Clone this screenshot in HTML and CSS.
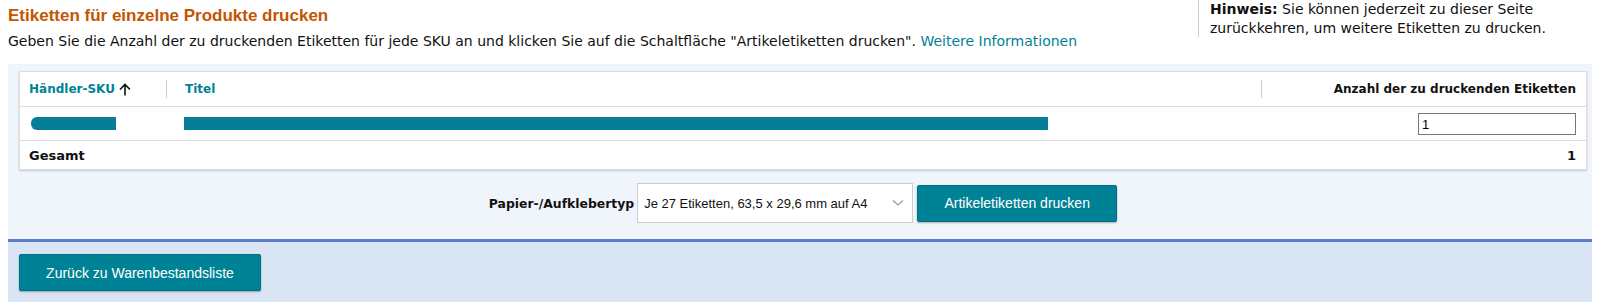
FILE: index.html
```html
<!DOCTYPE html>
<html lang="de">
<head>
    <meta charset="UTF-8">
    <title>Etiketten drucken</title>
    <link rel="stylesheet" href="styles.css">
</head>
<body>
    <div class="top">
        <div class="intro">
            <h1>Etiketten für einzelne Produkte drucken</h1>
            <p>Geben Sie die Anzahl der zu druckenden Etiketten für jede SKU an und klicken Sie auf die Schaltfläche "Artikeletiketten drucken". <a href="#">Weitere Informationen</a></p>
        </div>
        <div class="hint">
            <b>Hinweis:</b> Sie können jederzeit zu dieser Seite zurückkehren, um weitere Etiketten zu drucken.
        </div>
    </div>

    <div class="panel">
        <div class="card">
            <div class="row head">
                <div class="col sku"><span class="link">Händler-SKU</span> <span class="arrow">
                    <svg width="12" height="13" viewBox="0 0 12 13"><path d="M6 12.5V1.5M1 6.5L6 1.5L11 6.5" fill="none" stroke="#111" stroke-width="1.6"/></svg>
                </span></div>
                <div class="col title"><span class="link">Titel</span></div>
                <div class="col qty">Anzahl der zu druckenden Etiketten</div>
            </div>
            <div class="row item">
                <div class="col sku"><span class="bar sku-bar"></span></div>
                <div class="col title"><span class="bar title-bar"></span></div>
                <div class="col qty"><input class="qty-input" type="text" value="1"></div>
            </div>
            <div class="row total">
                <div class="col sku">Gesamt</div>
                <div class="col title"></div>
                <div class="col qty">1</div>
            </div>
        </div>

        <div class="controls">
            <label class="paper-label">Papier-/Aufklebertyp</label>
            <div class="select">
                <span>Je 27 Etiketten, 63,5 x 29,6 mm auf A4</span>
                <svg width="12" height="8" viewBox="0 0 12 8"><path d="M1 1.5L6 6L11 1.5" fill="none" stroke="#999" stroke-width="1.3"/></svg>
            </div>
            <button class="btn">Artikeletiketten drucken</button>
        </div>
    </div>

    <div class="footer">
        <button class="btn back">Zurück zu Warenbestandsliste</button>
    </div>
</body>
</html>
```

FILE: styles.css
```css
body {
    margin: 0 8px;
    font-family: "DejaVu Sans", Verdana, sans-serif;
    font-size: 13px;
    color: #111;
    background: #fff;
}
.top {
    display: flex;
    justify-content: space-between;
    height: 64px;
}
.intro h1 {
    margin: 6px 0 0;
    font-family: "Liberation Sans", Arial, sans-serif;
    font-size: 17px;
    font-weight: bold;
    color: #c45500;
}
.intro p {
    margin: 7px 0 0;
    font-size: 14px;
    color: #111;
}
.intro a {
    color: #008296;
    text-decoration: none;
}
.hint {
    width: 360px;
    margin-right: 22px;
    padding: 0 0 0 11px;
    border-left: 1px solid #ccc;
    font-size: 14px;
    line-height: 19px;
    height: 37px;
    color: #111;
}
.panel {
    background: #f0f4fb;
    padding: 7px 5px 16px 11px;
}
.card {
    background: #fff;
    border: 1px solid #dcdcdc;
    box-shadow: 0 1px 2px rgba(0,0,0,0.18);
}
.row {
    display: flex;
    align-items: center;
    border-bottom: 1px solid #ddd;
    padding: 0 10px 0 9px;
}
.row:last-child {
    border-bottom: none;
}
.row.head {
    height: 34px;
    font-weight: bold;
    font-size: 12px;
}
.row.item {
    height: 33px;
}
.row.total {
    height: 28px;
    font-weight: bold;
    font-size: 13px;
}
.col.sku {
    width: 137px;
    display: flex;
    align-items: center;
}
.row.head .col.sku {
    height: 18px;
    border-right: 1px solid #ccc;
}
.col.title {
    flex: 1;
    padding-left: 18px;
    display: flex;
    align-items: center;
}
.row.head .col.title {
    height: 18px;
    border-right: 1px solid #ccc;
}
.col.qty {
    width: 314px;
    text-align: right;
}
.link {
    color: #008296;
}
.arrow {
    margin-left: 4px;
    display: inline-flex;
}
.bar {
    display: block;
    height: 13px;
    background: #067f96;
}
.sku-bar {
    width: 85px;
    margin-left: 2px;
    border-radius: 6px 0 0 6px;
}
.title-bar {
    width: 864px;
}
.qty-input {
    width: 150px;
    height: 16px;
    padding: 2px 3px;
    border: 1px solid #777;
    font-family: "Liberation Sans", Arial, sans-serif;
    font-size: 13px;
    box-sizing: content-box;
    margin-top: 1px;
}
.controls {
    display: flex;
    justify-content: center;
    align-items: center;
    margin-top: 13px;
}
.paper-label {
    font-weight: bold;
    font-size: 12.4px;
    margin-right: 3px;
}
.select {
    width: 276px;
    height: 40px;
    box-sizing: border-box;
    border: 1px solid #ccc;
    background: #fff;
    display: flex;
    align-items: center;
    justify-content: space-between;
    padding: 0 8px 0 6px;
    font-family: "Liberation Sans", Arial, sans-serif;
    font-size: 13px;
    margin-right: 4px;
}
.btn {
    background: #008296;
    color: #fff;
    border: 1px solid #007080;
    border-radius: 2px;
    box-shadow: 0 1px 2px rgba(0,0,0,0.3);
    font-family: "Liberation Sans", Arial, sans-serif;
    font-size: 14px;
    width: 200px;
    height: 37px;
    cursor: pointer;
}
.footer {
    border-top: 3px solid #5b7dc6;
    background: #d9e4f5;
    padding: 12px 11px 11px;
    height: 41px;
}
.btn.back {
    width: 242px;
    height: 37px;
}
```
